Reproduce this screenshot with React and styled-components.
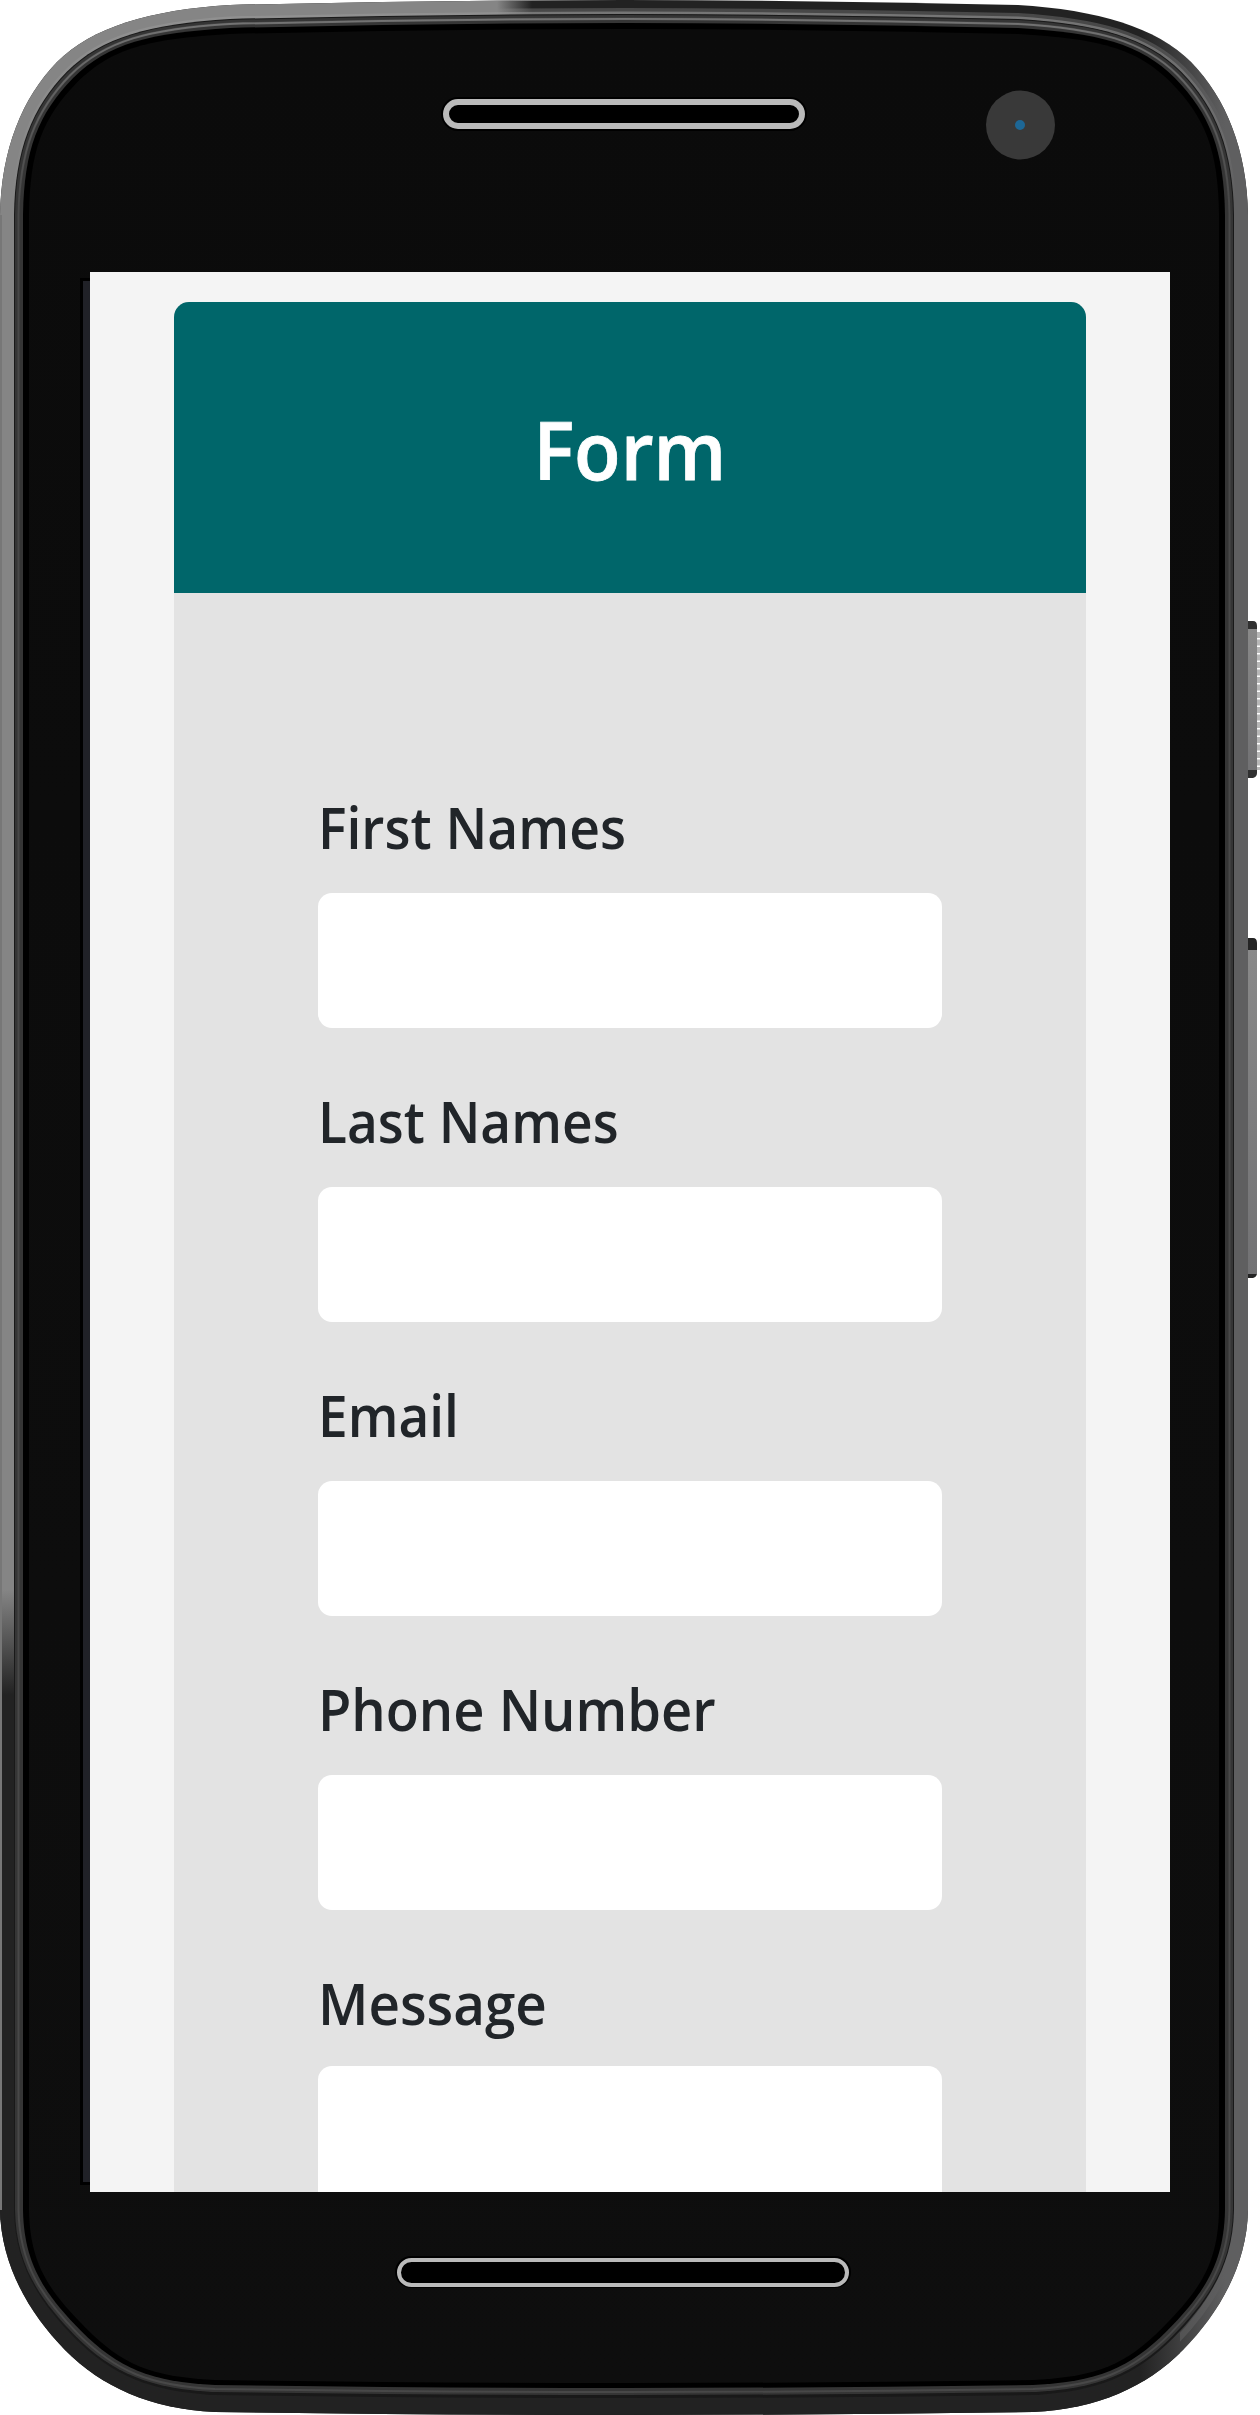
import React from "react";
import styled, { createGlobalStyle } from "styled-components";

const Global = createGlobalStyle`
  body { margin: 0; background: #fff; }
  *, *::before, *::after { box-sizing: border-box; }
`;

const Phone = styled.main`
  position: relative;
  width: 1260px;
  height: 2415px;
  padding: 272px 90px 223px;
  overflow: hidden;
  font-family: "Open Sans", "Noto Sans", sans-serif;
`;

const Shell = styled.svg`
  position: absolute;
  inset: 0;
  width: 1260px;
  height: 2415px;
`;

const Screen = styled.div`
  position: relative;
  height: 1920px;
  padding: 30px 84px 0;
  background: #f4f4f4;
  overflow: hidden;
`;

const Card = styled.form`
  background: #e3e3e3;
  border-radius: 15px 15px 0 0;
  overflow: hidden;
`;

const Header = styled.header`
  display: flex;
  align-items: center;
  justify-content: center;
  height: 291px;
  padding-top: 4px;
  background: #00666a;
`;

const Title = styled.h1`
  margin: 0;
  color: #fff;
  font-size: 79px;
  font-weight: 600;
  line-height: 96px;
  -webkit-text-stroke: 0.8px #fff;
  transform: scaleX(0.965);
`;

const Fields = styled.div`
  display: flex;
  flex-direction: column;
  gap: 63px;
  padding: 204px 144px 0;
`;

const Field = styled.div`
  display: flex;
  flex-direction: column;
`;

const Label = styled.label`
  height: ${(p) => (p.$tight ? 93 : 96)}px;
  color: #212529;
  font-size: 57.5px;
  font-weight: 600;
  line-height: 60px;
  white-space: nowrap;
  transform: scaleX(${(p) => p.$stretch});
  transform-origin: left;
`;

const Input = styled.input`
  width: 624px;
  height: 135px;
  padding: 0 36px;
  border: 0;
  border-radius: 14px;
  background: #fff;
`;

const TextArea = styled.textarea`
  width: 624px;
  height: 280px;
  padding: 18px 36px;
  border: 0;
  border-radius: 14px;
  background: #fff;
  resize: none;
`;

/* Outline of the handset, inset by d at the top and sides and by b at the bottom. */
function outline(d, b = d) {
  const R = 1248;
  const H = 2415;
  const k = 0.7 * d;
  const kb = 0.7 * b;
  return [
    `M${d} 215`,
    `C${d + 1} 150 ${22 + k} ${98 + k} ${57 + k} ${62 + k}`,
    `C${92 + k} ${27 + k} 150 ${10 + d} 230 ${5 + d}`,
    `Q430 ${d} 624 ${d}`,
    `Q818 ${d} ${R - 230} ${5 + d}`,
    `C${R - 150} ${10 + d} ${R - 92 - k} ${27 + k} ${R - 57 - k} ${62 + k}`,
    `C${R - 22 - k} ${98 + k} ${R - d - 1} 150 ${R - d} 215`,
    `V${H - 205}`,
    `C${R - d - 1} ${H - 150} ${R - 29 - k} ${H - 102 - kb} ${R - 65 - k} ${H - 65 - kb}`,
    `C${R - 102 - k} ${H - 28 - kb} ${R - 150} ${H - 6 - b} ${R - 215} ${H - 3 - b}`,
    `Q818 ${H - b} 624 ${H - b}`,
    `Q430 ${H - b} 215 ${H - 3 - b}`,
    `C150 ${H - 6 - b} ${102 + k} ${H - 28 - kb} ${65 + k} ${H - 65 - kb}`,
    `C${29 + k} ${H - 102 - kb} ${d + 1} ${H - 150} ${d} ${H - 205}`,
    "Z",
  ].join(" ");
}

function Handset() {
  return (
    <Shell viewBox="0 0 1260 2415" aria-hidden="true">
      <defs>
        <clipPath id="body"><path d={outline(0)} /></clipPath>
        <linearGradient id="topEdge" x1="497" x2="532" y1="0" y2="0" gradientUnits="userSpaceOnUse">
          <stop offset="0" stopColor="#858585" />
          <stop offset="1" stopColor="#858585" stopOpacity="0" />
        </linearGradient>
        <linearGradient id="leftEdge" x1="0" x2="5" y1="1590" y2="1695" gradientUnits="userSpaceOnUse">
          <stop offset="0" stopColor="#858585" />
          <stop offset="1" stopColor="#222" />
        </linearGradient>
        <linearGradient id="rightEdge" x1="1140" x2="1225" y1="0" y2="0" gradientUnits="userSpaceOnUse">
          <stop offset="0" stopColor="#5f5f60" stopOpacity="0" />
          <stop offset="1" stopColor="#5f5f60" />
        </linearGradient>
        <linearGradient id="shine" x1="0" x2="0" y1="0" y2="200" gradientUnits="userSpaceOnUse">
          <stop offset="0" stopColor="#999" stopOpacity="0.6" />
          <stop offset="1" stopColor="#999" stopOpacity="0" />
        </linearGradient>
        <linearGradient id="face" x1="0" x2="0" y1="0" y2="1">
          <stop offset="0" stopColor="#0b0b0b" />
          <stop offset="1" stopColor="#0e0e0e" />
        </linearGradient>
        <linearGradient id="key" x1="0" x2="0" y1="0" y2="1">
          <stop offset="0" stopColor="#898989" />
          <stop offset="1" stopColor="#727274" />
        </linearGradient>
      </defs>

      <path d="M1247 621h6q4 0 4 5v147q0 4-4 5h-6z" fill="#303030" />
      <rect x="1247" y="629" width="10" height="141" fill="url(#key)" />
      <line x1="1258.5" x2="1258.5" y1="632" y2="770" stroke="#b8b8b8" strokeWidth="3" strokeDasharray="6 1.5" />
      <path d="M1247 938h6q4 0 4 5v330q0 4-4 5h-6z" fill="#242424" />
      <rect x="1247" y="950" width="10" height="324" fill="url(#key)" />

      <g clipPath="url(#body)">
        <rect width="1260" height="2415" fill="#222" />
        <path d={outline(11)} fill="none" stroke="#484848" strokeWidth="6" />
        <rect y="2205" width="1180" height="210" fill="#222" />
        <rect width="560" height="1500" fill="url(#topEdge)" />
        <rect y="1500" width="60" height="720" fill="url(#leftEdge)" />
        <rect x="1130" width="120" height="2415" fill="url(#rightEdge)" />
        <path d={outline(13, 16)} fill="none" stroke="url(#shine)" strokeWidth="3" />
        <path d="M1 215V2210" stroke="#777" strokeWidth="2" />
      </g>
      <path d={outline(14, 17)} fill="#191919" />
      <path d={outline(15, 20)} fill="#353535" />
      <path d={outline(18.5, 23)} fill="none" stroke="#484848" strokeWidth="2" />
      <path d={outline(19, 24)} fill="none" stroke="url(#shine)" strokeWidth="2" />
      <path d={outline(23, 27)} fill="#000" />
      <path d={outline(29, 32)} fill="url(#face)" />
      <rect x="80" y="278" width="12" height="1907" fill="#000" />
      <rect x="83" y="281" width="8" height="1901" fill="#202127" />

      <rect x="441" y="97" width="366" height="34" rx="17" fill="#000" />
      <rect x="446" y="102" width="356" height="24" rx="12" fill="#000" stroke="#bababa" strokeWidth="6" />
      <rect x="395" y="2256" width="456" height="32" rx="16" fill="#000" />
      <rect x="399" y="2260" width="448" height="25" rx="12.5" fill="#000" stroke="#bababa" strokeWidth="4" />
      <circle cx="1020.5" cy="125" r="34.5" fill="#393939" />
      <circle cx="1020" cy="125" r="5" fill="#1d6796" />
    </Shell>
  );
}

const fields = [
  { label: "First Names", stretch: 0.929 },
  { label: "Last Names", stretch: 0.926 },
  { label: "Email", stretch: 0.925 },
  { label: "Phone Number", stretch: 0.943 },
];

export default function App() {
  return (
    <>
      <Global />
      <Phone>
        <Handset />
        <Screen>
          <Card>
            <Header><Title>Form</Title></Header>
            <Fields>
              {fields.map(({ label, stretch }) => (
                <Field key={label}>
                  <Label htmlFor={label} $stretch={stretch}>{label}</Label>
                  <Input id={label} />
                </Field>
              ))}
              <Field>
                <Label htmlFor="message" $tight $stretch={0.952}>Message</Label>
                <TextArea id="message" />
              </Field>
            </Fields>
          </Card>
        </Screen>
      </Phone>
    </>
  );
}
